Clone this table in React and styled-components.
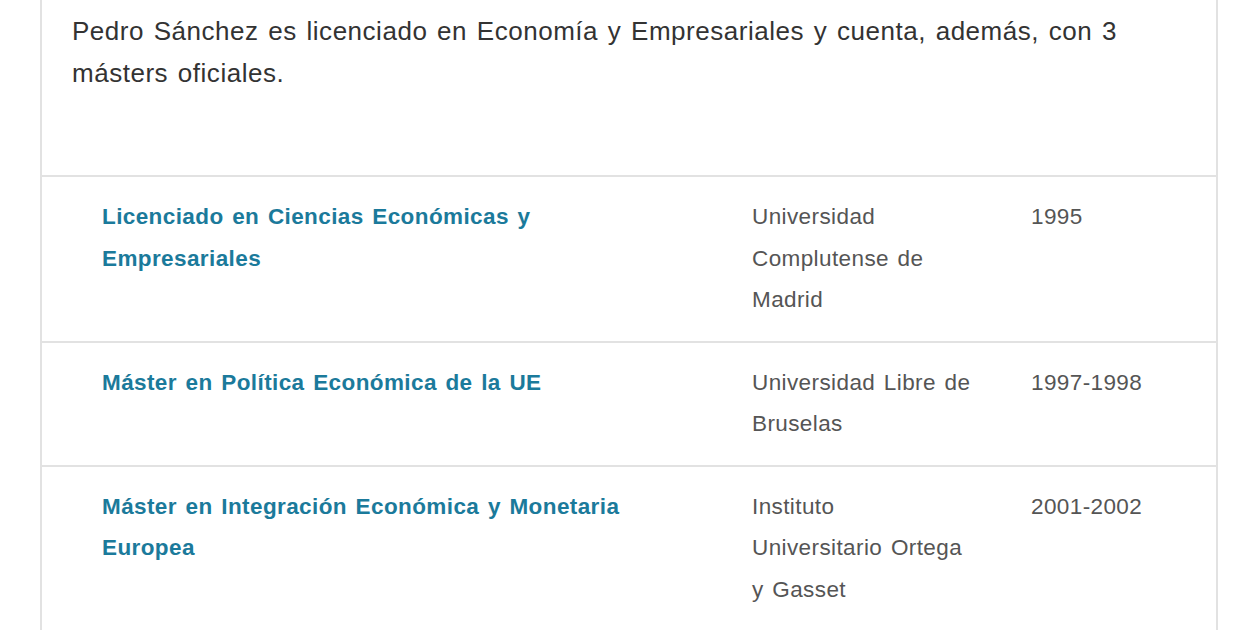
import React from 'react';
import styled, { createGlobalStyle } from 'styled-components';

const GlobalStyle = createGlobalStyle`
    body {
        margin: 0;
        background: #fff;
        font-family: "Liberation Sans", Arial, Helvetica, sans-serif;
    }
`;

const Page = styled.div`
    width: 1258px;
    height: 630px;
    overflow: hidden;
    padding-left: 40px;
    box-sizing: border-box;
`;

const Card = styled.div`
    width: 1178px;
    border-left: 2px solid #e2e2e2;
    border-right: 2px solid #e2e2e2;
    box-sizing: border-box;
`;

const Intro = styled.p`
    margin: 0;
    padding: 10px 54px 81px 30px;
    font-size: 26px;
    line-height: 42px;
    letter-spacing: 0.52px;
    word-spacing: 2px;
    color: #333;
`;

const Row = styled.div`
    display: grid;
    grid-template-columns: 650px 279px 1fr;
    padding: 19px 0 20px 60px;
    border-top: 2px solid #e2e2e2;
    font-size: 22.5px;
    line-height: 41.5px;
    letter-spacing: 0.4px;
    word-spacing: 2px;
`;

const Title = styled.div`
    padding-right: 80px;
    font-weight: bold;
    color: #1b7a9b;
`;

const School = styled.div`
    padding-right: 59px;
    color: #555;
`;

const Year = styled.div`
    color: #555;
`;

const studies = [
    {
        title: 'Licenciado en Ciencias Económicas y Empresariales',
        school: 'Universidad Complutense de Madrid',
        year: '1995',
    },
    {
        title: 'Máster en Política Económica de la UE',
        school: 'Universidad Libre de Bruselas',
        year: '1997-1998',
    },
    {
        title: 'Máster en Integración Económica y Monetaria Europea',
        school: 'Instituto Universitario Ortega y Gasset',
        year: '2001-2002',
    },
];

export default function App() {
    return (
        <Page>
            <GlobalStyle />
            <Card>
                <Intro>
                    Pedro Sánchez es licenciado en Economía y Empresariales y
                    cuenta, además, con 3 másters oficiales.
                </Intro>
                {studies.map((s) => (
                    <Row key={s.title}>
                        <Title>{s.title}</Title>
                        <School>{s.school}</School>
                        <Year>{s.year}</Year>
                    </Row>
                ))}
            </Card>
        </Page>
    );
}
